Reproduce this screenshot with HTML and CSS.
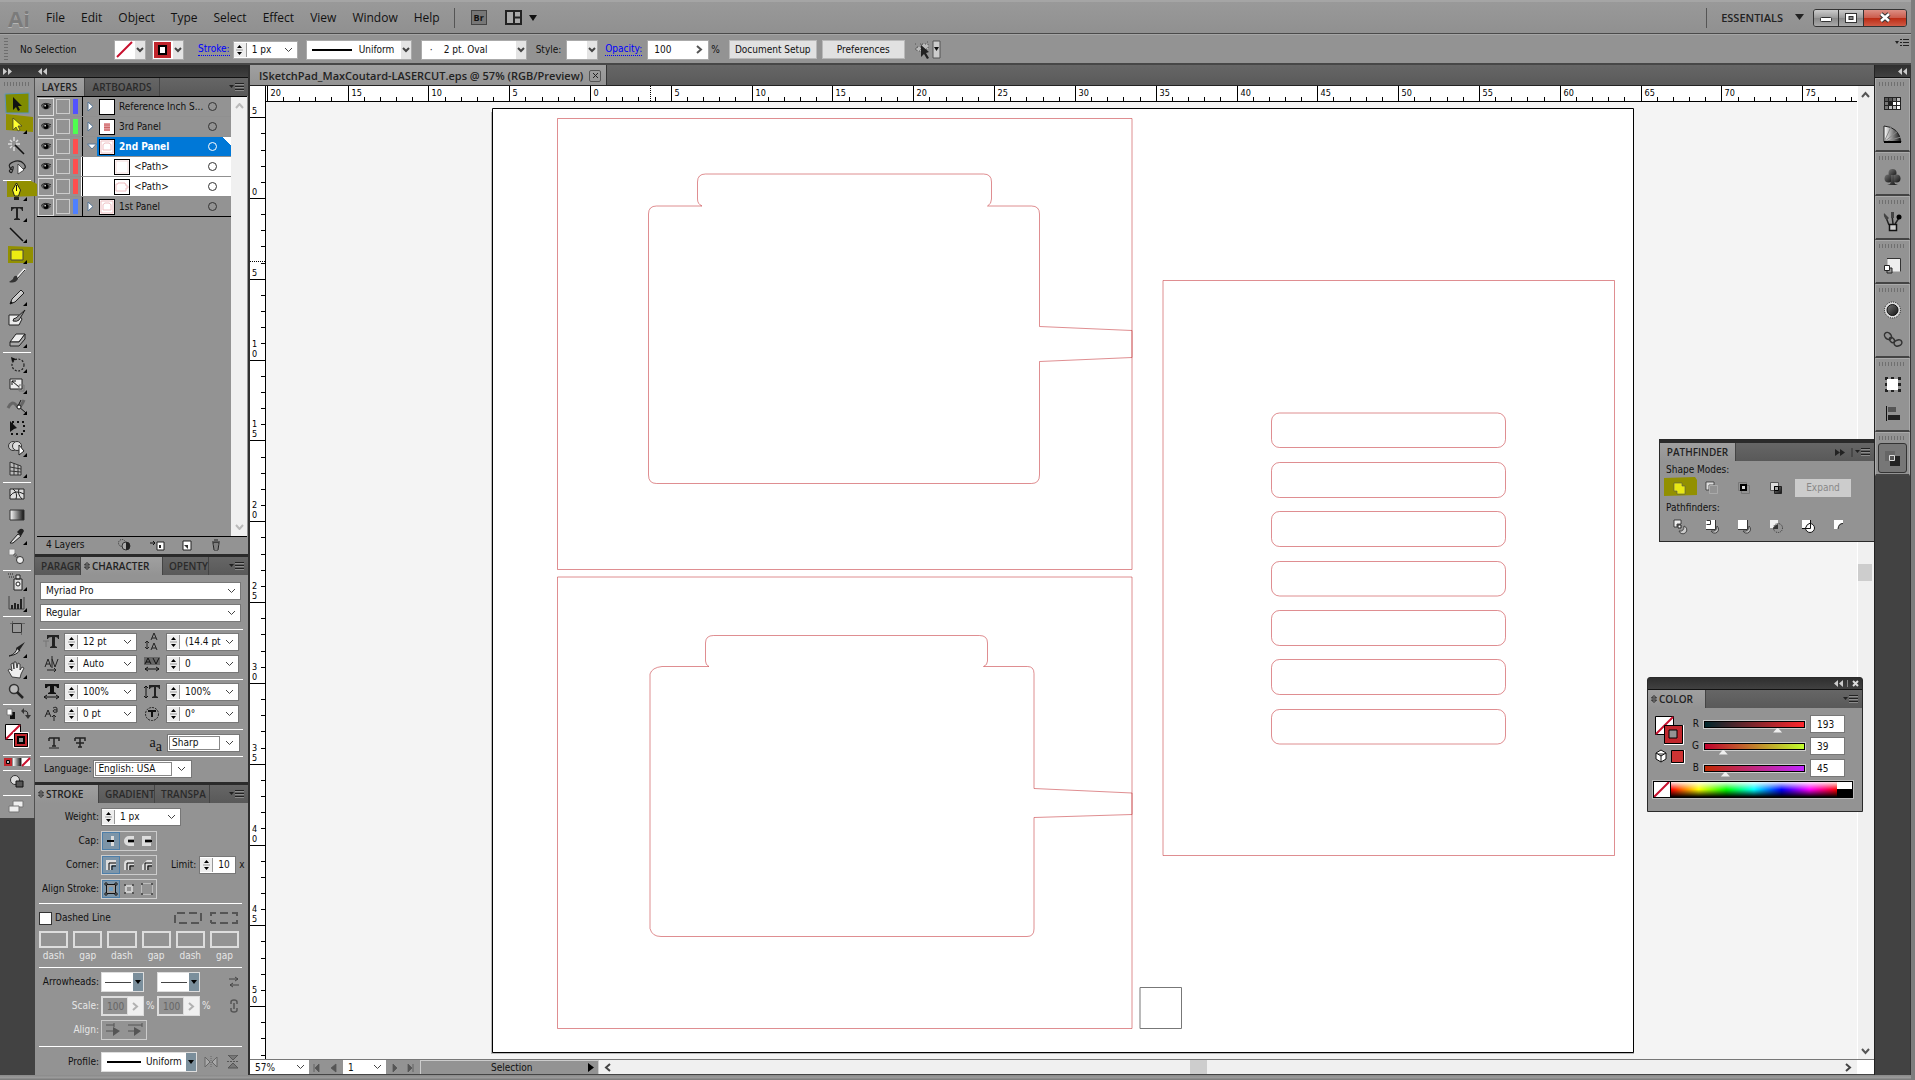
FILE: index.html
```html
<!DOCTYPE html>
<html lang="en">
<head>
<meta charset="utf-8">
<title>ISketchPad_MaxCoutard-LASERCUT.eps</title>
<link rel="stylesheet" href="styles.css">
</head>
<body>
<svg class="defs" aria-hidden="true">
  <defs>
    <linearGradient id="shine" x1="0" y1="0" x2="1" y2="1"><stop offset="0" stop-color="#fff"/><stop offset="1" stop-color="#999"/></linearGradient>
    <linearGradient id="dusk" x1="0" y1="0" x2="1" y2="1"><stop offset="0" stop-color="#777"/><stop offset="1" stop-color="#111"/></linearGradient>
    <linearGradient id="ramp"><stop offset="0" stop-color="#fff"/><stop offset="1" stop-color="#111"/></linearGradient>
  </defs>
  <symbol id="menu" viewBox="0 0 16 9"><path d="M0 2h5L2.500 5z" fill="#222"/><path d="M6 .5h9M6 3.500h9M6 6.500h9" stroke="#222"/><path d="M6 1.500h9M6 4.500h9M6 7.500h9" stroke="#aaa" stroke-opacity=".6"/></symbol>
  <symbol id="eye" viewBox="0 0 12 10"><path d="M0 5Q3 1 7 2t5 3Q9 9 5 8.500 2 8 0 5z" fill="#555"/><circle cx="6" cy="5" r="3" fill="#000"/><circle cx="5" cy="4" r="1" fill="#ddd"/><path d="M0 4Q4-1 12 3" fill="none" stroke="#111"/></symbol>
  <symbol id="updown" viewBox="0 0 6 8"><path d="M.5 3L3 .5 5.500 3zM.5 5L3 7.500 5.500 5z" fill="none" stroke="#222"/></symbol>
  <symbol id="corner" viewBox="0 0 34 21"><path d="M27 19v-4l-4 4z" fill="#000"/></symbol>
</svg>

<header class="menubar">
  <span class="logo">Ai</span>
  <nav class="menus">
    <button>File</button><button>Edit</button><button>Object</button><button>Type</button><button>Select</button><button>Effect</button><button>View</button><button>Window</button><button>Help</button>
  </nav>
  <i class="vline"></i>
  <button class="bridge" aria-label="Bridge">Br</button>
  <button class="arrange" aria-label="Arrange documents"><svg width="32" height="16"><path d="M1 1h15v13H1z" fill="#aaa" stroke="#222" stroke-width="2"/><path d="M9 1v13M9 7.500h7" stroke="#222" stroke-width="2"/><path d="M24 5h8l-4 6z" fill="#111"/></svg></button>
  <span class="grow"></span>
  <i class="vline"></i>
  <button class="workspace">ESSENTIALS <svg width="9" height="7"><path d="M0 0h9L4.500 6z" fill="#222"/></svg></button>
  <div class="winbtns">
    <button aria-label="Minimise"><svg width="12" height="10"><rect x=".5" y="4.500" width="11" height="4" rx="1" fill="#fff" stroke="#333"/></svg></button>
    <button aria-label="Restore"><svg width="12" height="10"><rect x=".5" y=".5" width="11" height="9" fill="#fff" stroke="#333"/><rect x="4" y="3.500" width="4" height="3" fill="#888" stroke="#333"/></svg></button>
    <button class="close" aria-label="Close"><svg width="14" height="11"><path d="M3 2l8 7M11 2l-8 7" stroke="#333" stroke-width="4.500"/><path d="M3 2l8 7M11 2l-8 7" stroke="#fff" stroke-width="2.500"/></svg></button>
  </div>
</header>

<section class="control">
  <i class="vgrip"></i>
  <span class="nosel">No Selection</span>
  <span class="pick"><svg width="20" height="18"><path d="M2 16L17 1" stroke="#c8102e" stroke-width="2"/></svg><button class="dd" aria-label="Fill"></button></span>
  <span class="pick gap6"><svg width="20" height="18"><path d="M1 1h17v16H1z" fill="#c1272d"/><path d="M6 5h7v8H6z" fill="#fff" stroke="#000" stroke-width="2"/></svg><button class="dd" aria-label="Stroke colour"></button></span>
  <a class="tip gap14" href="#stroke">Stroke:</a>
  <span class="combo c65 gap3"><i class="spin"></i><select aria-label="Stroke weight"><option>1 px</option></select></span>
  <span class="pick c106 gap8"><i class="rule"></i><span>Uniform</span><button class="dd" aria-label="Width profile"></button></span>
  <span class="pick c106 gap9"><span class="brush">·</span><span class="pt">2 pt. Oval</span><button class="dd" aria-label="Brush"></button></span>
  <span class="gap9">Style:</span>
  <span class="pick gap5"><svg width="20" height="18"></svg><button class="dd" aria-label="Style"></button></span>
  <a class="tip gap7" href="#opacity">Opacity:</a>
  <span class="pick c62 gap5"><input class="op" value="100" aria-label="Opacity"><b class="more"></b></span>
  <span class="gap2">%</span>
  <button class="btn c88">Document Setup</button>
  <button class="btn c83">Preferences</button>
  <svg class="gap9" width="30" height="20"><path d="M1 4h2M6 4h2M1 9h2M13 2h1M3 7h4v4H3zM8 4h6v5H8z" fill="#bbb" stroke="#555" stroke-dasharray="1 2"/><path d="M7 5l8 7-3 1 3 5-2 1-3-5-3 3z" fill="#222"/><path d="M19 1h7v17h-7z" fill="#ccc" stroke="#555"/><path d="M20 7h5l-2.500 4z" fill="#111"/></svg>
  <span class="grow"></span>
  <svg class="ctlmenu" width="14" height="9"><path d="M0 3h4L2 6z" fill="#222"/><path d="M5 1.500h2M8 1.500h6M5 4.500h2M8 4.500h6M5 7.500h2M8 7.500h6" stroke="#222"/></svg>
</section>

<main class="work">
  <aside class="toolcol">
    <div class="strip"><svg width="9" height="7"><path d="M0 0l4 3.500L0 7zM5 0l4 3.500L5 7z" fill="#ccc"/></svg></div>
    <div class="tools">
      <i class="hgrip"></i>
      <button aria-label="Selection"><svg><path d="M5 0l24-1v20H6z" fill="#7f8c00" stroke="#5b95bd"/><path d="M13 3v13l3-3 2 4 2-1-2-4h4z" fill="#111"/></svg></button>
      <button aria-label="Direct selection"><svg><path d="M6-1l27 3v15L6 15z" fill="#929000"/><path d="M13 3v12l3-3 2 4 2-1-2-4h4z" fill="#ffff30" stroke="#333" stroke-width=".7"/><use href="#corner"/></svg></button>
      <button aria-label="Magic wand"><svg><path d="M15 9l9 9" stroke="#111" stroke-width="1.600"/><path d="M14 1v4M14 11v4M8 8h4M16 8h4M10 4l2 2M18 4l-2 2M10 12l2-2" stroke="#ddd" stroke-width="1.500"/></svg></button>
      <button aria-label="Lasso"><svg><path d="M12 13Q6 8 13 5t11 2-4 6M12 12q-4 1-2 3t3-3-3 0" fill="none" stroke="#222" stroke-width="1.200"/><path d="M18 7v10l6-4z" fill="#fff" stroke="#222" stroke-width=".7"/></svg></button>
      <i class="tsep"></i>
      <button aria-label="Pen"><svg><path d="M7-1h24l6 3v12l-30 1z" fill="#929000"/><path d="M16.500 1l4 7-2 6h-4l-2-6z" fill="#ffff30" stroke="#222"/><path d="M16.500 3v6" stroke="#111"/><path d="M14 15h5v3h-5z" fill="#222"/><use href="#corner"/></svg></button>
      <button aria-label="Type"><svg><path d="M11 4h12v4h-1q0-2-2-2.500h-2V15l2 1v1h-6v-1l2-1V5.500h-2q-2 .5-2 2.500h-1z" fill="#222"/><use href="#corner"/></svg></button>
      <button aria-label="Line segment"><svg><path d="M10 4l13 13" stroke="#111" stroke-width="1.500"/><use href="#corner"/></svg></button>
      <button aria-label="Rectangle"><svg><path d="M8 1l25 1v16H8z" fill="#929000"/><path d="M11 5h12v10H11z" fill="#ecec12" stroke="#444"/><use href="#corner"/></svg></button>
      <button aria-label="Paintbrush"><svg><path d="M25 3l-8 9" stroke="#eee" stroke-width="2.500"/><path d="M25 4l-8 9" stroke="#222"/><path d="M17 10q-3-1-4 3l-4 3q6 2 9-3z" fill="#333"/></svg></button>
      <button aria-label="Pencil"><svg><path d="M10 17l2-5 9-9 3 3-9 9z" fill="url(#shine)" stroke="#222"/><path d="M10 17l1-3 2 2z" fill="#111"/><use href="#corner"/></svg></button>
      <button aria-label="Blob brush"><svg><path d="M9 7h10l3 4-3 6H9z" fill="#eee" stroke="#222"/><path d="M25 2l-9 8q-3 0-3 3 4 1 6-1z" fill="#999" stroke="#222"/></svg></button>
      <button aria-label="Eraser"><svg><path d="M10 13l6-8h9l-6 8z" fill="#eee" stroke="#222"/><path d="M10 13v4h9l6-7V5l-6 8z" fill="#aaa" stroke="#222"/><use href="#corner"/></svg></button>
      <i class="tsep"></i>
      <button aria-label="Rotate"><svg><circle cx="18" cy="11" r="6" fill="none" stroke="#222" stroke-width="1.200" stroke-dasharray="2 1.500"/><path d="M11 3l5 2-4 3z" fill="#111"/><use href="#corner"/></svg></button>
      <button aria-label="Scale"><svg><path d="M10 4h12v10H10z" fill="#eee" stroke="#222"/><path d="M12 6l7 6M12 6h4M12 6v4" stroke="#111"/><path d="M19 10h5v6h-5z" fill="none" stroke="#777"/><use href="#corner"/></svg></button>
      <button aria-label="Warp"><svg><path d="M8 12q4-8 8-3t8-5" fill="none" stroke="#666" stroke-width="3"/><path d="M21 4l-3 6 8 7" fill="none" stroke="#111"/><circle cx="19" cy="11" r="2" fill="#fff" stroke="#111"/><use href="#corner"/></svg></button>
      <button aria-label="Free transform"><svg><path d="M12 5h12v12H12z" fill="none" stroke="#111" stroke-width="2" stroke-dasharray="2 3"/><path d="M10 4l7 7-3 1-4 3z" fill="#111"/></svg></button>
      <button aria-label="Shape builder"><svg><circle cx="13" cy="8" r="4.500" fill="#ccc" stroke="#333"/><circle cx="17" cy="8" r="4.500" fill="#ddd" stroke="#333"/><path d="M19 7v10l5-4z" fill="#fff" stroke="#222"/><use href="#corner"/></svg></button>
      <button aria-label="Perspective grid"><svg><path d="M10 3l11 4v9H10zM14 4v12M18 6v10M10 8l11 2M10 12l11 1" fill="#bbb" stroke="#333"/><use href="#corner"/></svg></button>
      <i class="tsep"></i>
      <button aria-label="Mesh"><svg><path d="M10 5h14v10H10z" fill="#ddd" stroke="#222"/><path d="M10 12q5-7 14-2M13 5q5 4 3 10M19 5q-2 5 3 10" fill="none" stroke="#222"/></svg></button>
      <button aria-label="Gradient"><svg><path d="M10 5h14v10H10z" fill="url(#ramp)" stroke="#333"/></svg></button>
      <button aria-label="Eyedropper"><svg><path d="M10 17l8-9 3 2-8 7z" fill="#ddd" stroke="#222"/><path d="M17 6l3-3q3-1 4 2l-3 5z" fill="#222"/><use href="#corner"/></svg></button>
      <button aria-label="Blend"><svg><path d="M9 2h6v6H9z" fill="#eee" stroke="#888"/><path d="M14 7l5 5" stroke="#555" stroke-width="3" stroke-dasharray="1 1"/><circle cx="20" cy="13" r="3.500" fill="#eee" stroke="#333"/></svg></button>
      <i class="tsep"></i>
      <button aria-label="Symbol sprayer"><svg><path d="M14 7h8v11h-8zM16 3h4v4h-4z" fill="#ddd" stroke="#222"/><circle cx="18" cy="12" r="2" fill="#fff" stroke="#222"/><path d="M8 2h6M9 5h5" stroke="#222" stroke-dasharray="1 1"/><use href="#corner"/></svg></button>
      <button aria-label="Column graph"><svg><path d="M9 3v13h15V4" fill="none" stroke="#444"/><path d="M12 16v-4M15 16v-6M18 16v-5M21 16V6" stroke="#222" stroke-width="2"/><use href="#corner"/></svg></button>
      <i class="tsep"></i>
      <button aria-label="Artboard"><svg><path d="M12.500 5.500h9v9h-9z" fill="#999" stroke="#333"/><path d="M10 5.500h2M22 5.500h3M12.500 3v2M21.500 15v2" stroke="#666"/></svg></button>
      <button aria-label="Slice"><svg><path d="M9 17q7-2 8-8l3 2q-3 5-11 6z" fill="#ddd" stroke="#222"/><path d="M16 9l3 3 6-9z" fill="#222"/><use href="#corner"/></svg></button>
      <button aria-label="Hand"><svg><path d="M12 17l-4-7 2-1 2 2-1-7 2-1 1 6V2h2l1 6 1-5 2 1v6l2-3 2 1-3 6-1 4z" fill="#eee" stroke="#222" stroke-width=".8"/><use href="#corner"/></svg></button>
      <button aria-label="Zoom"><svg><circle cx="14" cy="8" r="4.500" fill="#bbb" stroke="#333" stroke-width="1.500"/><path d="M17 11l6 6" stroke="#222" stroke-width="2.500"/></svg></button>
      <i class="tsep"></i>
      <button class="h16" aria-label="Default and swap"><svg><path d="M10 6h5v7h-5z" fill="#111"/><path d="M7 3h5v6H7z" fill="#fff" stroke="#777"/><path d="M23 5h3q2 0 2 5" stroke="#222" fill="none"/><path d="M24 2v6l-3-3zM25 9h6l-3 4z" fill="#333"/></svg></button>
      <button class="h32" aria-label="Fill and stroke"><svg><path d="M5.500 2.500h15v15h-15z" fill="#fff" stroke="#000"/><path d="M6 17L20 3" stroke="#c8102e" stroke-width="2"/><path d="M13.500 10.500h15v15h-15z" fill="#c1272d" stroke="#fff"/><path d="M14.500 11.500h13v13h-13z" fill="none" stroke="#000"/><path d="M18 15h6v6h-6z" fill="#939393" stroke="#000" stroke-width="2"/></svg></button>
      <i class="tsep"></i>
      <button class="h11" aria-label="Paint type"><svg><path d="M4 1h8v8H4z" fill="#c1272d"/><path d="M6.500 3.500h3v3h-3z" fill="#bbb" stroke="#000"/><path d="M13 1h8v8h-8z" fill="url(#ramp)"/><path d="M22 1h8v8h-8z" fill="#fff"/><path d="M22 9l8-8" stroke="#c8102e" stroke-width="2"/></svg></button>
      <i class="tsep"></i>
      <button aria-label="Drawing mode"><svg><circle cx="15" cy="8" r="4.500" fill="#ddd" stroke="#333"/><path d="M16 9h7v6h-7z" fill="#555" stroke="#111"/></svg></button>
      <i class="tsep"></i>
      <button aria-label="Screen mode"><svg><path d="M13 4h10v6H13z" fill="#eee" stroke="#777"/><path d="M9 9h10v6H9z" fill="#eee" stroke="#777"/></svg></button>
    </div>
  </aside>

  <aside class="dock">
    <div class="strip"><svg width="9" height="7"><path d="M4 0L0 3.500 4 7zM9 0L5 3.500 9 7z" fill="#ccc"/></svg></div>
    <section class="panel layers">
      <div class="tabs"><button class="tab on w50">LAYERS</button><button class="tab w75">ARTBOARDS</button><span class="grow"></span><svg class="pm"><use href="#menu"/></svg></div>
      <div class="layerbox">
        <ul class="layerlist">
          <li><svg class="eye"><use href="#eye"/></svg><i class="lock"></i><i class="bar blue"></i><i class="tri"></i><i class="thumb"></i><span>Reference Inch S...</span><i class="ring"></i></li>
          <li><svg class="eye"><use href="#eye"/></svg><i class="lock"></i><i class="bar green"></i><i class="tri"></i><i class="thumb"><svg width="14" height="14"><path d="M4 3h6v8H4z" fill="#e39a9e"/><path d="M4 5h6M4 7.500h6M4 10h6" stroke="#c66"/></svg></i><span>3rd Panel</span><i class="ring"></i></li>
          <li class="sel"><svg class="eye"><use href="#eye"/></svg><i class="lock"></i><i class="bar red"></i><i class="tri open"></i><i class="thumb"><svg width="14" height="14"><path d="M1 1h12v12H1zM3 5q0-1 2-2h4q2 1 2 2v5H3z" fill="none" stroke="#efbfc2"/></svg></i><span>2nd Panel</span><i class="ring"></i></li>
          <li class="sub"><svg class="eye"><use href="#eye"/></svg><i class="lock"></i><i class="bar red"></i><i class="tri"></i><i class="thumb"><svg width="14" height="14"><path d="M1 1h12v12H1z" fill="none" stroke="#f6dcdc"/></svg></i><span>&lt;Path&gt;</span><i class="ring"></i></li>
          <li class="sub"><svg class="eye"><use href="#eye"/></svg><i class="lock"></i><i class="bar red"></i><i class="tri"></i><i class="thumb"><svg width="14" height="14"><path d="M1 4h2V3h7v1h1v2h2v2h-2v3H1z" fill="none" stroke="#efbfc2"/></svg></i><span>&lt;Path&gt;</span><i class="ring"></i></li>
          <li class="last"><svg class="eye"><use href="#eye"/></svg><i class="lock"></i><i class="bar sky"></i><i class="tri"></i><i class="thumb"><svg width="14" height="14"><path d="M1 1h12v12H1zM3 5q0-1 2-2h4q2 1 2 2v5H3z" fill="none" stroke="#efbfc2"/></svg></i><span>1st Panel</span><i class="ring"></i></li>
        </ul>
        <div class="pscroll"><svg width="9" height="6"><path d="M1 5l3.500-4L8 5" fill="none" stroke="#bbb" stroke-width="2"/></svg><svg width="9" height="6"><path d="M1 1l3.500 4L8 1" fill="none" stroke="#bbb" stroke-width="2"/></svg></div>
      </div>
      <div class="layerfoot">
        <span>4 Layers</span>
        <svg width="14" height="12"><circle cx="4" cy="4" r="3.500" fill="none" stroke="#333" stroke-dasharray="1 1"/><circle cx="8" cy="7" r="4" fill="#aaa" stroke="#333"/><path d="M8 3a4 4 0 010 8z" fill="#222"/></svg>
        <svg width="15" height="12"><path d="M0 4h5M3 2l2 2-2 2" stroke="#111" fill="none"/><path d="M7 3h7v8H7z" fill="#fff" stroke="#222"/><path d="M9 6h2v3H9z" fill="#222"/></svg>
        <svg width="11" height="12"><path d="M1 2h8v9H1z" fill="#fff" stroke="#222"/><path d="M2 6h4v4z" fill="#333"/></svg>
        <svg width="11" height="12"><path d="M1 3h8M3 1h4M2 4h6l-1 7H3zM4 5v5M6 5v5" fill="#ddd" stroke="#222"/></svg>
      </div>
    </section>

    <section class="panel">
      <div class="tabs"><button class="tab w46 cut">PARAGR</button><button class="tab on front w82"><svg class="ud"><use href="#updown"/></svg>CHARACTER</button><button class="tab w46 cut">OPENTY</button><span class="grow"></span><svg class="pm"><use href="#menu"/></svg></div>
      <div class="char">
        <select class="wide" aria-label="Font family"><option>Myriad Pro</option></select>
        <select class="wide" aria-label="Font style"><option>Regular</option></select>
        <hr>
        <div class="grid4">
          <label for="fs" aria-label="Font size"><svg width="18" height="16"><path d="M4 1h12v4h-1q0-2-3-2v9l2 1v1H7v-1l2-1V3Q5 3 5 5H4z" fill="#222"/><path d="M0 7h6M3 7v6" stroke="#777"/></svg></label><span class="combo"><i class="spin"></i><select id="fs"><option>12 pt</option></select></span>
          <label for="ld" aria-label="Leading"><svg width="16" height="18"><path d="M7 7l3-7 3 7M8 5h4M7 17l3-7 3 7M8 15h4M3 8v8M1 10l2-2 2 2M1 14l2 2 2-2" fill="none" stroke="#222"/></svg></label><span class="combo"><i class="spin"></i><select id="ld"><option>(14.4 pt</option></select></span>
          <label for="kn" aria-label="Kerning"><svg width="16" height="16"><path d="M1 11l3-8 3 8M2 8h4M8 3l3 8 3-8M8 0v12M3 14h9M10 12l2 2-2 2" fill="none" stroke="#222"/></svg></label><span class="combo"><i class="spin"></i><select id="kn"><option>Auto</option></select></span>
          <label for="tr" aria-label="Tracking"><svg width="16" height="16"><path d="M0 1h16v8H0z" fill="#666"/><path d="M1 8l3-6 3 6M2 6h4M9 2l3 6 3-6M1 13h14M4 11l-3 2 3 2M12 11l3 2-3 2" fill="none" stroke="#111"/></svg></label><span class="combo"><i class="spin"></i><select id="tr"><option>0</option></select></span>
        </div>
        <hr>
        <div class="grid4">
          <label for="hs" aria-label="Horizontal scale"><svg width="18" height="16"><path d="M2 0h14v4h-2q0-2-3-2v6l2 1v1H5V9l2-1V2Q4 2 4 4H2z" fill="#111"/><path d="M1 13h15M4 11l-3 2 3 2M13 11l3 2-3 2" fill="none" stroke="#111"/></svg></label><span class="combo"><i class="spin"></i><select id="hs"><option>100%</option></select></span>
          <label for="vs" aria-label="Vertical scale"><svg width="18" height="16"><path d="M6 1h11v4h-1q0-2-3-2v9l2 1v1H9v-1l2-1V3Q7 3 7 5H6z" fill="#222"/><path d="M3 2v12M1 4l2-2 2 2M1 12l2 2 2-2" fill="none" stroke="#111"/></svg></label><span class="combo"><i class="spin"></i><select id="vs"><option>100%</option></select></span>
          <label for="bs" aria-label="Baseline shift"><svg width="16" height="16"><path d="M1 11l3-7 3 7M2 8h4M9 2q4-2 4 1v3q-4 1-4-1t4-1M10 15V9M8 11l2-2 2 2" fill="none" stroke="#222"/></svg></label><span class="combo"><i class="spin"></i><select id="bs"><option>0 pt</option></select></span>
          <label for="rt" aria-label="Rotation"><svg width="16" height="16"><circle cx="8" cy="8" r="6.500" fill="none" stroke="#222" stroke-dasharray="2 1"/><path d="M4 5h8M8 5v6" stroke="#111" stroke-width="2"/></svg></label><span class="combo"><i class="spin"></i><select id="rt"><option>0°</option></select></span>
        </div>
        <hr>
        <div class="aarow">
          <svg width="12" height="12"><path d="M1 1h10v3M1 4V1M6 1v8M4 9h4" fill="none" stroke="#222" stroke-width="1.500"/><path d="M1 11h10" stroke="#222"/></svg>
          <svg class="strike" width="12" height="12"><path d="M1 1h10v3M1 4V1M6 1v9M4 10h4M2 6h8" fill="none" stroke="#222" stroke-width="1.500"/></svg>
          <label for="aa">a<sub>a</sub></label><span class="boxed w73"><input id="aa" value="Sharp"><b class="chev"></b></span>
        </div>
        <hr>
        <div class="langrow"><label for="lang">Language:</label><span class="boxed w99"><input id="lang" value="English: USA"><b class="chev"></b></span></div>
      </div>
    </section>

    <section class="panel strokep" id="stroke">
      <div class="tabs"><button class="tab on front w64"><svg class="ud"><use href="#updown"/></svg>STROKE</button><button class="tab w56 cut">GRADIENT</button><button class="tab w55 cut">TRANSPA</button><span class="grow"></span><svg class="pm"><use href="#menu"/></svg></div>
      <div class="srow"><label for="wt">Weight:</label><span class="combo w80"><i class="spin"></i><select id="wt"><option>1 px</option></select></span></div>
      <div class="srow"><span class="lab">Cap:</span><span class="trio">
        <button class="on" aria-label="Butt"><svg><path d="M8 3h3v10H8z" fill="#ddd"/><path d="M4 8h7" stroke="#000" stroke-width="2"/></svg></button>
        <button aria-label="Round"><svg><path d="M13 3H8a5 5 0 000 10h5v-3H7V6h6z" fill="#ddd"/><path d="M7 8h6" stroke="#000" stroke-width="2"/></svg></button>
        <button aria-label="Projecting"><svg><path d="M3 3h9v3H6v4h6v3H3z" fill="#ddd"/><path d="M6 8h7" stroke="#000" stroke-width="2"/></svg></button></span></div>
      <div class="srow"><span class="lab">Corner:</span><span class="trio">
        <button class="on" aria-label="Mitre"><svg><path d="M3 13V3h10v5H8v5z" fill="#ddd"/><path d="M6 13V6h7M9 13V9h4" fill="none" stroke="#000"/></svg></button>
        <button aria-label="Round join"><svg><path d="M3 13V7q0-4 4-4h6v5H8v5z" fill="#ddd"/><path d="M6 13V6h7M9 13V9h4" fill="none" stroke="#000"/></svg></button>
        <button aria-label="Bevel"><svg><path d="M3 13V8l5-5h5v5H8v5z" fill="#ddd"/><path d="M6 13V6h7M9 13V9h4" fill="none" stroke="#000"/></svg></button></span>
        <label class="limit" for="lim">Limit:</label><span class="combo w37"><i class="spin"></i><input id="lim" value="10"></span><span class="x">x</span></div>
      <div class="srow"><span class="lab">Align Stroke:</span><span class="trio">
        <button class="on" aria-label="Centre"><svg><path d="M3.500 3.500h9v9h-9z" fill="#999" stroke="#111"/><path d="M2 2h2v2H2zM12 2h2v2h-2zM2 12h2v2H2zM12 12h2v2h-2z" fill="#ddd" stroke="#111"/><path d="M6 6h4v4H6z" fill="#6d9fc5"/></svg></button>
        <button aria-label="Inside"><svg><path d="M5 5h6v6H5z" fill="none" stroke="#ccc" stroke-width="2"/><path d="M3 3h2v2H3zM11 3h2v2h-2zM3 11h2v2H3zM11 11h2v2h-2z" fill="#555"/></svg></button>
        <button aria-label="Outside"><svg><path d="M2.500 2.500h11v11h-11z" fill="none" stroke="#bbb"/><path d="M2 2h2v2H2zM12 2h2v2h-2zM2 12h2v2H2zM12 12h2v2h-2z" fill="#555"/></svg></button></span></div>
      <hr>
      <div class="dashrow"><input type="checkbox" id="dl"><label for="dl">Dashed Line</label><span class="grow"></span>
        <svg width="28" height="12"><path d="M1 11V1h26v10z" fill="none" stroke="#555" stroke-width="2" stroke-dasharray="8 4"/></svg>
        <svg width="28" height="12"><path d="M1 11V8M1 4V1h5M10 1h8M22 1h5v3M27 8v3h-5M18 11h-8M6 11H1" fill="none" stroke="#555" stroke-width="2"/></svg></div>
      <div class="dashes">
        <label><input disabled>dash</label><label><input disabled>gap</label><label><input disabled>dash</label><label><input disabled>gap</label><label><input disabled>dash</label><label><input disabled>gap</label>
      </div>
      <hr>
      <div class="srow"><span class="lab">Arrowheads:</span><span class="lined w43"><i></i><button aria-label="Start arrowhead"></button></span><span class="lined w43 gap13"><i></i><button aria-label="End arrowhead"></button></span><svg class="tail" width="12" height="12"><path d="M1 3h9M7 1l3 2-3 2M11 9H2M5 7L2 9l3 2" fill="none" stroke="#444"/></svg></div>
      <div class="srow dis"><span class="lab">Scale:</span><span class="scale"><input disabled value="100" aria-label="Start scale"><b class="more"></b></span><span class="pc">%</span><span class="scale"><input disabled value="100" aria-label="End scale"><b class="more"></b></span><span class="pc">%</span><svg class="tail" width="12" height="14"><path d="M3 5V3q0-2 3-2t3 2v2M3 9v2q0 2 3 2t3-2V9M6 4v6" fill="none" stroke="#555" stroke-width="1.500"/></svg></div>
      <div class="srow dis"><span class="lab">Align:</span><span class="duo"><svg width="20" height="16"><path d="M3 3h8M11 1v4M3 9h8" stroke="#555"/><path d="M10 5l7 4-7 5z" fill="#555"/></svg><svg width="20" height="16"><path d="M3 3h14M17 1v4M3 9h8" stroke="#555"/><path d="M9 5l7 4-7 5z" fill="#555"/></svg></span></div>
      <hr>
      <div class="srow"><span class="lab">Profile:</span><span class="lined w96"><i class="thick"></i><span>Uniform</span><button aria-label="Profile"></button></span><svg class="tail" width="36" height="14"><path d="M1 2v10l5-5zM13 2v10L8 7z" fill="#aaa" stroke="#666"/><path d="M7 1v12" stroke="#666" stroke-dasharray="1 1"/><path d="M24 0h10l-5 5zM24 13h10l-5-5z" fill="#777" stroke="#555"/><path d="M23 6.500h12" stroke="#555" stroke-dasharray="2 1"/></svg></div>
    </section>
  </aside>

  <section class="doc">
    <div class="doctabs"><div class="doctab"><span>ISketchPad_MaxCoutard-LASERCUT.eps @ 57% (RGB/Preview)</span><button aria-label="Close document"><svg width="7" height="7"><path d="M1 1l5 5M6 1L1 6" stroke="#222"/></svg></button></div></div>
    <div class="stage">
      <div class="view">
        <div class="rulercorner"></div>
        <svg class="ruler hr" id="hr"></svg>
        <svg class="ruler vr" id="vr"></svg>
        <div class="canvas">
          <svg class="art" width="1640" height="960">
            <g transform="translate(-266 -102)" fill="none">
              <path d="M491 112h1143v942H491z" fill="#b9b9b9"/>
              <path d="M492.500 108.500h1141v944h-1141z" fill="#fff" stroke="#000"/>
              <g stroke="#c1272d" stroke-opacity=".52">
                <path d="M557.500 118.500H1132V569.500H557.500zM557.500 577H1132V1028.500H557.500z"/>
                <path d="M1163 280.500h451.500v575H1163z"/>
                <path d="M697.500 182q0-8 8-8h278q8 0 8 8v17q0 5-4 7h44q8 0 8 8V326.500L1132 330.500V357.500L1039.500 361.500V475q0 8.500-8 8.500H656.500q-8 0-8-8.500V214q0-8 8-8H702q-4.500-2-4.500-7z"/>
                <path d="M705.500 643q0-7.500 8-7.500h266q8 0 8 7.500v18q0 4-4 5.500h44q6.500 0 6.500 7V788.500L1132 793V814.500L1034 817.500V929q0 7.500-7 7.500H661q-9 0-11-8V674q2-6.500 12-7.500h47q-3.500-1.500-3.500-5.500z"/>
                <rect x="1271.500" y="413" width="234" height="34.500" rx="8"/>
                <rect x="1271.500" y="462.500" width="234" height="35" rx="8"/>
                <rect x="1271.500" y="511.500" width="234" height="35" rx="8"/>
                <rect x="1271.500" y="561.500" width="234" height="34.500" rx="8"/>
                <rect x="1271.500" y="610.500" width="234" height="35" rx="8"/>
                <rect x="1271.500" y="659.500" width="234" height="35" rx="8"/>
                <rect x="1271.500" y="709.500" width="234" height="34.500" rx="8"/>
              </g>
              <path d="M1140 987.500h41.500v41H1140z" stroke="#777"/>
            </g>
          </svg>
        </div>
      </div>
      <div class="vscroll"><svg width="9" height="7"><path d="M1 6l3.500-4L8 6" fill="none" stroke="#555" stroke-width="2"/></svg><i class="thumbv"></i><svg width="9" height="7"><path d="M1 1l3.500 4L8 1" fill="none" stroke="#555" stroke-width="2"/></svg></div>
    </div>
    <footer class="status">
      <select class="zoomsel" aria-label="Zoom"><option>57%</option></select>
      <svg class="nav" width="34" height="11"><path d="M5 2v8M10 2v8L6 6zM27 2v8l-5-4z" fill="#555" stroke="#555" stroke-width=".8"/></svg>
      <select class="pagesel" aria-label="Artboard number"><option>1</option></select>
      <svg class="nav" width="34" height="11"><path d="M7 2v8l4-4zM22 2v8l4-4zM27 2v8" fill="#555" stroke="#555" stroke-width=".8"/></svg>
      <button class="mode"><span>Selection</span><svg width="6" height="9"><path d="M0 0l6 4.500L0 9z" fill="#000"/></svg></button>
      <div class="hscroll"><svg width="7" height="9"><path d="M6 1L2 4.500 6 8" fill="none" stroke="#444" stroke-width="2"/></svg><i class="thumbh"></i><svg width="7" height="9"><path d="M1 1l4 3.500L1 8" fill="none" stroke="#444" stroke-width="2"/></svg></div>
      <i class="fill"></i>
    </footer>

    <section class="float pathfinder">
      <div class="tabs"><button class="tab on w76">PATHFINDER</button><span class="grow"></span><svg width="20" height="9"><path d="M0 1l5 3.500L0 8zM5 1l5 3.500L5 8z" fill="#222"/><path d="M17 0v9" stroke="#333"/></svg><svg class="pm"><use href="#menu"/></svg></div>
      <span class="ptitle">Shape Modes:</span>
      <div class="pficons">
        <button aria-label="Unite"><svg><path d="M-5-1l31-1 2 3v15l-33 1z" fill="#929000"/><path d="M5 4h8v3h3v8H8v-3H5z" fill="#e8e814" stroke="#555" stroke-width=".6"/></svg></button>
        <button aria-label="Minus front"><svg><path d="M5 3h8v3H8v5H5z" fill="#ddd" stroke="#222" stroke-width=".7"/><path d="M8.500 6.500h8v8h-8z" fill="none" stroke="#aaa"/></svg></button>
        <button aria-label="Intersect"><svg><path d="M5.500 3.500h8v8h-8z" fill="none" stroke="#777"/><path d="M8.500 6.500h8v8h-8z" fill="none" stroke="#777"/><path d="M8 6h5v5H8z" fill="#ddd" stroke="#000" stroke-width="2"/></svg></button>
        <button aria-label="Exclude"><svg><path d="M5.500 3.500h8v8h-8z" fill="#ddd" stroke="#555"/><path d="M9.500 7.500h7v7h-7z" fill="url(#dusk)" stroke="#222"/><path d="M9.500 7.500h4v4h-4z" fill="#aaa" stroke="#000"/></svg></button>
        <button class="expand" disabled>Expand</button>
      </div>
      <span class="ptitle">Pathfinders:</span>
      <div class="pficons">
        <button aria-label="Divide"><svg><path d="M5 3h7v4H8v3H5z" fill="#eee" stroke="#222" stroke-width=".8"/><path d="M9 8h3v3H9z" fill="#fff" stroke="#222"/><path d="M15 9a4 4 0 11-5 5q5 1 5-5z" fill="#ccc" stroke="#444"/></svg></button>
        <button aria-label="Trim"><svg><path d="M5 3h9v9H5z" fill="#fff"/><path d="M5.500 3.500h4v4h-4M14.500 3v9.500H5" stroke="#333" fill="none"/><path d="M16 9a4 4 0 11-6 5q6 1 6-5z" fill="#bbb" stroke="#444"/></svg></button>
        <button aria-label="Merge"><svg><path d="M5 3h9v9H5z" fill="#fff"/><path d="M14.500 3v9.500H5" stroke="#333" fill="none"/><path d="M16 9a4 4 0 11-6 5q6 1 6-5z" fill="#bbb" stroke="#444"/></svg></button>
        <button aria-label="Crop"><svg><path d="M5 3h8v8H5z" fill="#eee"/><path d="M13 7v5H8q1-4 5-5z" fill="#333"/><circle cx="13" cy="11" r="4.500" fill="none" stroke="#333" stroke-dasharray="1 1"/></svg></button>
        <button aria-label="Outline"><svg><circle cx="13" cy="11" r="4.500" fill="#fff" stroke="#111"/><path d="M5 3h8v8H5z" fill="#fff"/><path d="M5 11.500h8.500V3M8.500 11q1-4 5-5" fill="none" stroke="#111"/></svg></button>
        <button aria-label="Minus back"><svg><path d="M5 3h9v3q-5 0-5 6H5z" fill="#fff"/><path d="M14 6.500q-4.500 0-5 5.500" fill="none" stroke="#222"/></svg></button>
      </div>
    </section>

    <section class="float color">
      <div class="strip right"><svg width="9" height="7"><path d="M4 0L0 3.500 4 7zM9 0L5 3.500 9 7z" fill="#ccc"/></svg><i></i><svg width="7" height="7"><path d="M1 1l5 5M6 1L1 6" stroke="#ddd" stroke-width="2"/></svg></div>
      <div class="tabs"><button class="tab on front w58"><svg class="ud"><use href="#updown"/></svg>COLOR</button><span class="grow"></span><svg class="pm"><use href="#menu"/></svg></div>
      <div class="colorbody">
        <svg width="32" height="50"><path d="M1.500 1.500h18v18h-18z" fill="#fff" stroke="#000"/><path d="M2 19L19 2" stroke="#c8102e" stroke-width="2"/><path d="M10.500 10.500h18v18h-18z" fill="#c1272d" stroke="#000"/><path d="M10 29.500h19.500V10" fill="none" stroke="#fff"/><path d="M15 15h8v8h-8z" fill="#939393" stroke="#000"/><path d="M2 38l5-3 5 3v6l-5 3-5-3zM2 38l5 3 5-3M7 41v6" fill="#fff" stroke="#111"/><path d="M17.500 35.500h12v12h-12z" fill="#cc3333" stroke="#000"/><path d="M17 48.500h13.500V35" fill="none" stroke="#fff"/></svg>
        <div class="sliders">
          <label for="r">R</label><input type="range" class="gr" min="0" max="255" value="193" aria-label="Red"><input id="r" value="193">
          <label for="g">G</label><input type="range" class="gg" min="0" max="255" value="39" aria-label="Green"><input id="g" value="39">
          <label for="b">B</label><input type="range" class="gb" min="0" max="255" value="45" aria-label="Blue"><input id="b" value="45">
        </div>
      </div>
      <div class="spectrum"><svg width="16" height="15"><path d="M0 15L15 0" stroke="#c8102e" stroke-width="2"/></svg><i class="hue"></i><i class="bw"></i></div>
    </section>
  </section>

  <aside class="rdock">
    <div class="strip right"><svg width="9" height="7"><path d="M4 0L0 3.500 4 7zM9 0L5 3.500 9 7z" fill="#ccc"/></svg></div>
    <div class="rgroup"><i class="hgrip"></i>
      <button aria-label="Swatches"><svg><path d="M6 7h17v13H6z" fill="#222"/><path d="M7 8h3v3H7zM11 8h3v3h-3z" fill="#555"/><path d="M15 8h3v3h-3zM7 12h3v3H7zM7 16h3v3H7z" fill="#777"/><path d="M19 8h3v3h-3zM11 16h3v3h-3zM15 16h3v3h-3z" fill="#bbb"/><path d="M15 12h3v3h-3zM19 12h3v3h-3zM19 16h3v3h-3z" fill="#fff"/></svg></button>
      <button aria-label="Color guide"><svg><path d="M6 22V6q15 1 17 16z" fill="url(#ramp)" stroke="#222"/><path d="M6 22L13 7M6 22l14-11M6 22l17-5" stroke="#888"/><path d="M6 22h17" stroke="#000" stroke-width="2"/></svg></button></div>
    <div class="rgroup"><i class="hgrip"></i><button aria-label="Symbols"><svg><g fill="url(#dusk)"><circle cx="14.500" cy="9" r="4"/><circle cx="10.500" cy="14.500" r="4"/><circle cx="18.500" cy="14.500" r="4"/><path d="M13 11h3v6l1 3 3 1H9l3-1 1-3z"/></g></svg></button></div>
    <div class="rgroup"><i class="hgrip"></i><button aria-label="Brushes"><svg><path d="M11 17L7 7M15 16l-1-9M17 16l4-6" stroke="#222" stroke-width="1.500"/><path d="M6 5l5 5-2 2q-4-3-3-7zM13 4h3v6h-3z" fill="#444"/><circle cx="21" cy="9" r="2.500" fill="#000"/><path d="M11.500 16.500h7v6h-7z" fill="#ccc" stroke="#111" stroke-width="1.500"/></svg></button></div>
    <div class="rgroup"><i class="hgrip"></i><button aria-label="Stroke"><svg><path d="M9.500 6.500h13v13h-13z" fill="#eee"/><path d="M9 6.500h13.500v13" stroke="#333" fill="none"/><path d="M9 16h5v5H9z" fill="#999" stroke="#222"/><path d="M6.500 13.500h5v5h-5z" fill="#fff" stroke="#222"/></svg></button></div>
    <div class="rgroup"><i class="hgrip"></i>
      <button aria-label="Appearance"><svg><circle cx="14.500" cy="14" r="8" fill="#ddd" stroke="#222" stroke-dasharray="1 1"/><circle cx="14.500" cy="14" r="5.500" fill="url(#dusk)" stroke="#111"/></svg></button>
      <button aria-label="Links"><svg><g fill="none" stroke="#333" stroke-width="1.500"><ellipse cx="10" cy="10" rx="4" ry="3" transform="rotate(45 10 10)"/><ellipse cx="14" cy="14" rx="3" ry="2" transform="rotate(45 14 14)"/><ellipse cx="20" cy="17" rx="4" ry="3" transform="rotate(-20 20 17)"/></g></svg></button></div>
    <div class="rgroup"><i class="hgrip"></i>
      <button aria-label="Transform"><svg><path d="M7 7h3v3H7zM13 7h3v3h-3zM20 7h3v3h-3zM7 13h3v3H7zM20 13h3v3h-3zM7 19h3v3H7zM13 19h3v3h-3zM20 19h3v3h-3z" fill="#222"/><path d="M9 9h11v11H9z" fill="#fff"/></svg></button>
      <button aria-label="Align"><svg><path d="M8.500 6v15" stroke="#111"/><path d="M10 7h8v5h-8z" fill="#555"/><path d="M10 15h12v5H10z" fill="#222"/></svg></button></div>
    <div class="rgroup"><i class="hgrip"></i><button class="on" aria-label="Pathfinder"><svg><path d="M7 7h10v10H7z" fill="#666"/><path d="M12 12h10v10H12z" fill="#222"/><path d="M11.500 11.500h5v5h-5z" fill="#555" stroke="#ddd"/></svg></button></div>
  </aside>
</main>
<div class="frame"></div>
<script src="rulers.js"></script>
</body>
</html>
```
FILE: styles.css
```css
* { box-sizing: border-box; }
html, body { height: 100%; margin: 0; }
body {
  display: flex;
  flex-direction: column;
  min-width: 1100px;
  background: #939393;
  color: #111;
  font: 10px/12px "DejaVu Sans Condensed", "DejaVu Sans", sans-serif;
  overflow: hidden;
  border-right: 4px solid #7d7d7d;
}
button, input, select { font: inherit; color: inherit; padding: 0; margin: 0; border: 0; background: none; border-radius: 0; min-width: 0; }
select { appearance: none; }
button { display: flex; align-items: center; justify-content: center; }
svg { display: block; flex: none; }
i { font-style: normal; }
.defs { position: absolute; width: 0; height: 0; }
.grow { flex: 1; }
.gap2 { margin-left: 2px; } .gap3 { margin-left: 3px; } .gap5 { margin-left: 5px; } .gap6 { margin-left: 6px; }
.gap7 { margin-left: 7px; } .gap8 { margin-left: 8px; } .gap9 { margin-left: 9px; } .gap13 { margin-left: 13px; } .gap14 { margin-left: 14px; }

/* menu bar */
.menubar {
  display: flex; align-items: center; flex: none; height: 34px; padding: 0 4px 0 8px;
  border-top: 2px solid #a5a5a5; border-bottom: 1px solid #4a4a4a;
  background: linear-gradient(#999, #909090);
}
.logo { width: 32px; font: 700 22px/28px "Open Sans", sans-serif; color: #7b7b7b; text-shadow: 0 1px #b5b5b5; }
.menus { display: flex; gap: 16px; margin-left: 6px; font: 12px/16px "Open Sans", sans-serif; }
.vline { width: 1px; height: 20px; margin-left: 14px; background: #555; }
.bridge { width: 16px; height: 15px; margin-left: 16px; border: 1px solid #444; background: #777; font: 700 9px/12px "Open Sans", sans-serif; }
.arrange { margin-left: 18px; }
.workspace { margin-left: 14px; gap: 12px; font: 600 11px/16px "Open Sans", sans-serif; color: #222; }
.winbtns { display: flex; margin-left: 9px; height: 18px; border: 1px solid #333; border-radius: 3px; overflow: hidden; }
.winbtns button { width: 25px; background: linear-gradient(#ccc, #999 50%, #888 51%, #aaa); border-right: 1px solid #333; }
.winbtns .close { width: 42px; border: 0; background: linear-gradient(#dc8f84, #cb5b4b 50%, #bb2b14 51%, #cf5a45); }

/* control bar */
.control {
  display: flex; align-items: center; flex: none; height: 31px; padding: 1px 2px 0 4px;
  border-top: 1px solid #a5a5a5; border-bottom: 2px solid #474747;
}
.vgrip { width: 4px; height: 24px; background: repeating-linear-gradient(#555 0 1px, transparent 1px 3px); opacity: .6; }
.nosel { width: 94px; margin-left: 12px; }
.tip { color: #00f; text-decoration: none; border-bottom: 1px dotted #00f; }
.pick { display: flex; align-items: center; height: 20px; border: 1px solid #aaa; background: #fff; }
.dd {
  width: 10px; height: 18px; margin-left: auto; flex: none;
  background: #e4e4e4 url("data:image/svg+xml,%3Csvg xmlns='http://www.w3.org/2000/svg' width='8' height='6'%3E%3Cpath d='M1 1l3 3 3-3' fill='none' stroke='%23444' stroke-width='2'/%3E%3C/svg%3E") center no-repeat;
}
.c106 { width: 106px; } .c62 { width: 62px; } .c65 { width: 65px; }
.rule { width: 40px; height: 2px; margin: 0 7px 0 5px; background: #000; }
.brush { width: 22px; padding-left: 8px; }
.op { width: 42px; padding-left: 6px; }
.more { width: 18px; height: 16px; background: url("data:image/svg+xml,%3Csvg xmlns='http://www.w3.org/2000/svg' width='7' height='9'%3E%3Cpath d='M1 1l4 3.500L1 8' fill='none' stroke='%23555' stroke-width='2'/%3E%3C/svg%3E") center no-repeat; }
.btn { height: 19px; border: 1px solid #b9b9b9; background: #e1e1e1; }
.c88 { width: 88px; margin-left: 9px; } .c83 { width: 83px; margin-left: 5px; }
.ctlmenu { align-self: flex-start; margin-top: 2px; }

/* combo boxes */
.combo { display: flex; height: 18px; border: 1px solid #777; background: #fff; }
.control .combo { border-color: #aaa; }
.combo select, .wide, .zoomsel, .pagesel, .combo input { flex: 1; width: 10px; padding-left: 5px; }
.combo select, .wide, .zoomsel, .pagesel, .chev {
  background: #fff url("data:image/svg+xml,%3Csvg xmlns='http://www.w3.org/2000/svg' width='9' height='6'%3E%3Cpath d='M1 1l3.500 3.500L8 1' fill='none' stroke='%23444' stroke-width='1'/%3E%3C/svg%3E") right 4px center no-repeat;
}
.spin {
  width: 13px; margin: 1px 0; border-right: 1px solid #999;
  background: #eee url("data:image/svg+xml,%3Csvg xmlns='http://www.w3.org/2000/svg' width='7' height='12'%3E%3Cpath d='M1 4l2.500-3L6 4zM1 8l2.500 3L6 8z'/%3E%3Cpath d='M0 6h7' stroke='%23999'/%3E%3C/svg%3E") center no-repeat;
}

/* work area */
.work { display: flex; flex: 1; min-height: 0; }
.strip { display: flex; align-items: center; height: 13px; flex: none; padding-left: 3px; background: linear-gradient(#2f2f2f, #404040); border-bottom: 1px solid #111; }
.strip.right { justify-content: flex-end; padding-right: 3px; }
.toolcol { position: relative; z-index: 1; width: 35px; flex: none; background: #424242; }
.tools { display: flex; flex-direction: column; padding-top: 4px; background: #939393; border-right: 1px solid #505050; }
.tools button { display: block; height: 21px; }
.tools svg { width: 34px; height: 21px; overflow: visible; }
.tools .h16, .tools .h16 svg { height: 16px; }
.tools .h32, .tools .h32 svg { height: 31px; }
.tools .h11, .tools .h11 svg { height: 11px; }
.hgrip { height: 4px; margin: 0 4px 8px; background: repeating-linear-gradient(90deg, #666 0 1px, transparent 1px 3px); opacity: .8; }
.tsep { height: 2px; margin: 1px 3px; border-bottom: 1px solid #fff; }

.dock { display: flex; flex-direction: column; width: 215px; flex: none; background: #939393; border-right: 2px solid #303030; }
.dock .strip { margin-left: -1px; padding-left: 4px; }
.panel { flex: none; border-bottom: 3px solid #2a2a2a; }
.tabs { display: flex; align-items: center; height: 18px; padding-right: 3px; background: linear-gradient(#666, #595959); }
.tab { height: 18px; font: 600 10px/18px "Open Sans", sans-serif; color: #2a2a2a; border-right: 1px solid #444; white-space: nowrap; overflow: hidden; }
.tab.on { background: linear-gradient(#a0a0a0, #939393); color: #222; }
.tab.cut { justify-content: flex-start; padding-left: 6px; }
.tab.front { justify-content: flex-start; padding-left: 3px; }
.ud { width: 6px; height: 8px; margin-right: 2px; }
.pm { width: 16px; height: 9px; }
.w50 { width: 50px; } .w75 { width: 75px; } .w46 { width: 46px; } .w82 { width: 82px; } .w64 { width: 64px; } .w56 { width: 56px; } .w55 { width: 55px; } .w76 { width: 76px; } .w58 { width: 58px; }
hr { height: 1px; margin: 0 2px 0 0; border: 0; background: #fff; }

/* layers */
.layerbox { display: flex; height: 441px; margin: 0 1px 0 2px; border-top: 1px solid #000; border-bottom: 1px solid #000; }
.layerlist { flex: 1; margin: 0; padding: 0; list-style: none; }
.layerlist li { display: flex; align-items: center; height: 20px; border-bottom: 1px solid #909090; }
.layerlist span { flex: 1; padding-left: 4px; white-space: nowrap; }
.eye { width: 16px; height: 18px; padding: 3px 2px 4px; border: 1px solid #ddd; margin-left: 1px; }
.lock { width: 14px; height: 15px; margin-left: 2px; border: 1px solid #ccc; }
.bar { width: 5px; height: 15px; margin-left: 3px; }
.blue { background: #5252ff; } .green { background: #4fff4f; } .red { background: #ff4f4f; } .sky { background: #4f80ff; }
.tri { align-self: stretch; width: 16px; margin-left: 4px; border-left: 1px solid #000; background: url("data:image/svg+xml,%3Csvg xmlns='http://www.w3.org/2000/svg' width='7' height='11'%3E%3Cpath d='M1 1l5 4.500L1 10z' fill='%23fff' stroke='%23579'/%3E%3C/svg%3E") 4px center no-repeat; }
.tri.open { background-image: url("data:image/svg+xml,%3Csvg xmlns='http://www.w3.org/2000/svg' width='10' height='7'%3E%3Cpath d='M.5 1h9L5 6z' fill='%23fff' stroke='%23579'/%3E%3C/svg%3E"); }
.thumb { width: 16px; height: 16px; margin-left: 1px; border: 1px solid #000; background: #fff; }
.ring { width: 9px; height: 9px; margin-right: 14px; border: 1px solid #333; border-radius: 50%; }
.sel { background: linear-gradient(45deg, #0078d7 calc(100% - 6px), #fff 0) right / 134px 100% no-repeat; color: #fff; font-weight: 700; }
.sel .ring { border-color: #fff; }
.sub { background: linear-gradient(#fff, #fff) right / 150px 100% no-repeat; }
.sub .tri { background: none; margin-right: 15px; }
.layerlist .last { border-bottom: 1px solid #000; }
.pscroll { display: flex; flex-direction: column; justify-content: space-between; align-items: center; width: 16px; padding: 6px 0; background: #f0f0f0; }
.layerfoot { display: flex; align-items: center; height: 17px; padding: 0 26px 1px 11px; justify-content: space-between; }
.layerfoot span { width: 54px; }

/* character */
.char { display: flex; flex-direction: column; height: 207px; padding: 7px 5px 0; }
.wide { flex: none; width: 201px; height: 18px; margin-bottom: 4px; border: 1px solid #777; }
.char hr { margin: 3px 0 3px; flex: none; }
.grid4 { display: grid; grid-template-columns: 24px 73px 29px 73px; gap: 4px 0; align-items: center; padding: 0 0 3px; }
.grid4 label { display: flex; justify-content: center; }
.aarow { display: flex; align-items: center; height: 20px; padding: 0 3px 0 8px; }
.strike { margin-left: 14px; }
.aarow label { margin-left: auto; margin-right: 5px; font: 14px/14px "Liberation Serif", serif; }
sub { font-size: 14px; line-height: 0; }
.boxed { display: flex; height: 18px; padding: 1px; border: 1px solid #777; background: #fff; }
.boxed input { flex: 1; width: 10px; padding-left: 2px; border: 1px solid #888; }
.chev { width: 18px; }
.w73 { width: 73px; } .w99 { width: 99px; } .w80 { width: 80px; } .w37 { width: 37px; } .w43 { width: 43px; } .w96 { width: 96px; }
.langrow { display: flex; align-items: center; gap: 2px; padding-left: 4px; }

/* stroke */
.strokep { flex: 1; border: 0; }
.srow { display: flex; align-items: center; height: 20px; margin-top: 4px; }
.srow > label:first-child, .lab { width: 64px; margin-right: 2px; text-align: right; white-space: nowrap; }
.strokep hr { margin: 4px 6px 5px 4px; }
.srow .limit { margin-left: 14px; margin-right: 3px; }
.x { margin-left: 3px; }
.trio, .duo { display: flex; height: 20px; border: 1px solid #ccc; }
.trio button { width: 18px; height: 18px; border: 1px solid transparent; }
.trio .on { border-color: #4d7ea8; background: #7d95a8; }
.trio svg { width: 16px; height: 16px; }
.duo { width: 46px; align-items: center; justify-content: space-around; }
.dashrow { display: flex; align-items: center; gap: 8px; height: 18px; padding: 0 10px 0 4px; }
.dashrow input { appearance: none; width: 13px; height: 13px; background: #fff; border: 1px solid #333; }
.dashrow label { margin-left: -5px; }
.dashes { display: flex; gap: 5px; padding: 4px 9px 0 4px; color: #e6e6e6; }
.dashes label { flex: 1; display: flex; flex-direction: column; align-items: center; gap: 2px; }
.dashes input { width: 100%; height: 17px; border: 2px solid #ddd; }
.dashes + hr { margin-top: 5px; margin-bottom: 2px; }
.dis + hr { margin-top: 6px; }
.lined { display: flex; align-items: center; height: 20px; border: 1px solid #ddd; background: #fff; }
.lined i { width: 26px; height: 1px; margin-left: 3px; background: #444; }
.lined .thick { width: 34px; height: 2px; margin-right: 5px; margin-left: 5px; background: #000; }
.lined button { width: 10px; height: 18px; margin-left: auto; background: #7b8f9c url("data:image/svg+xml,%3Csvg xmlns='http://www.w3.org/2000/svg' width='6' height='4'%3E%3Cpath d='M0 0h6L3 4z'/%3E%3C/svg%3E") center no-repeat; }
.tail { margin-left: auto; margin-right: 8px; }
.dis { color: #e6e6e6; height: 20px; }
.scale { display: flex; align-items: center; width: 43px; height: 20px; border: 1px solid #ddd; background: #f0f0f0; }
.scale input { width: 26px; height: 18px; padding-left: 4px; border: 1px solid #ddd; background: #939393; color: #666; }
.scale .more { opacity: .4; width: 15px; }
.pc { width: 13px; padding-left: 2px; }

/* document */
.doc { position: relative; display: flex; flex-direction: column; flex: 1; min-width: 0; }
.doctabs { display: flex; height: 20px; flex: none; background: linear-gradient(#666, #5a5a5a); }
.doctab { display: flex; align-items: center; gap: 6px; padding: 1px 5px 0 9px; background: linear-gradient(#a0a0a0, #939393); border-right: 1px solid #333; font: 600 11px/18px "Open Sans", sans-serif; color: #222; white-space: nowrap; }
.doctab button { width: 12px; height: 12px; border: 1px solid #555; border-radius: 2px; }
.stage { display: flex; flex: 1; min-height: 0; border-top: 1px solid #222; }
.view { flex: 1; min-width: 0; display: grid; grid-template: 16px minmax(0, 1fr) / 16px minmax(0, 1fr); }
.rulercorner { background: #fff; border-right: 1px solid #000; }
.ruler { width: 100%; height: 100%; background: #fff; overflow: hidden; font-size: 9px; }
.hr { border-bottom: 1px solid #000; }
.vr { border-right: 1px solid #000; }
.canvas { background: #f4f4f4; overflow: hidden; min-height: 0; }
.vscroll { display: flex; flex-direction: column; align-items: center; width: 17px; padding: 5px 2px 4px 0; background: #f0f0f0; border-left: 1px solid #fff; }
.thumbv { width: 14px; height: 17px; margin-top: calc(50vh - 74px); margin-bottom: auto; background: #cdcdcd; }
.status { display: flex; height: 16px; flex: none; border-top: 1px solid #777; border-bottom: 1px solid #444; align-items: stretch; }
.zoomsel { flex: none; width: 59px; } .pagesel { flex: none; width: 43px; }
.zoomsel, .pagesel { padding-top: 1px; }
.nav { align-self: center; }
.mode { width: 179px; padding: 0 4px 0 70px; justify-content: space-between; border: 1px solid #ccc; border-bottom: 0; }
.hscroll { display: flex; flex: 1; align-items: center; padding: 0 5px; background: #f0f0f0; }
.thumbh { width: 17px; height: 14px; margin-left: calc(46% + 5px); margin-right: auto; background: #cdcdcd; }
.fill { width: 17px; background: #fff; }

/* floating panels */
.float { position: absolute; background: #939393; border: 1px solid #2a2a2a; }
.pathfinder { top: 374px; right: 0; width: 215px; height: 103px; border-top-width: 4px; border-right: 0; }
.ptitle { display: block; padding: 2px 6px 2px; line-height: 14px; }
.pficons { display: flex; padding-left: 9px; height: 19px; }
.pficons + .ptitle { padding-top: 3px; }
.pficons button { width: 32px; height: 19px; justify-content: flex-start; }
.pficons svg { width: 20px; height: 19px; overflow: visible; }
.pficons .expand { width: 56px; height: 18px; margin-left: -2px; justify-content: center; background: #ccc; color: #888; }
.color { top: 612px; right: 11px; width: 216px; height: 135px; border-radius: 3px 3px 0 0; }
.color .strip { height: 12px; gap: 4px; }
.strip i { width: 1px; height: 7px; background: #888; }
.colorbody { display: flex; padding: 7px 0 0 6px; }
.sliders { display: grid; grid-template-columns: 13px 101px 35px; column-gap: 5px; row-gap: 4px; align-items: center; }
.sliders label { text-align: right; }
.sliders input { height: 18px; padding-left: 6px; border: 1px solid #777; background: #fff; }
.sliders input[type=range] { appearance: none; width: 101px; height: 18px; padding: 0; border: 0; background: none; }
input[type=range]::-webkit-slider-runnable-track { height: 7px; border: 1px solid #000; outline: 1px solid #ccc; background: var(--g); }
input[type=range]::-webkit-slider-thumb { appearance: none; width: 9px; height: 5px; margin-top: 6px; background: #eee; clip-path: polygon(50% 0, 100% 100%, 0 100%); }
.gr { --g: linear-gradient(90deg, #00272d, #ff272d); }
.gg { --g: linear-gradient(90deg, #c1002d, #c1ff2d); }
.gb { --g: linear-gradient(90deg, #c12700, #c127ff); }
.spectrum { display: flex; height: 17px; width: 200px; margin: 4px 0 0 5px; border: 1px solid #000; outline: 1px solid #bbb; background: #fff; }
.hue { flex: 1; border-left: 1px solid #000; background: linear-gradient(rgba(255,255,255,.9), transparent 50%, #000), linear-gradient(90deg, red, #ff0, #0f0, #0ff, #00f, #f0f, red); }
.bw { width: 15px; background: linear-gradient(#fff 50%, #000 50%); }

/* right dock */
.rdock { width: 37px; flex: none; background: #424242; border-left: 1px solid #222; border-right: 1px solid #333; }
.rdock .strip { height: 13px; }
.rgroup { display: flex; flex-direction: column; align-items: center; padding: 3px 0 1px; background: #939393; border: 1px solid #aaa; border-bottom: 2px solid #444; }
.rgroup .hgrip { align-self: stretch; height: 4px; margin: 0 3px 3px; }
.rgroup button { width: 29px; height: 30px; }
.rgroup svg { width: 29px; height: 28px; }
.rgroup .on { border: 1px solid #333; border-radius: 3px; background: #777; }
.frame { height: 5px; flex: none; background: linear-gradient(#8a8a8a, #9a9a9a 50%, #777); }
```
FILE: rulers.js
```js
// Draws the tick marks and numbers of both rulers; one ruler unit is UNIT pixels.
const UNIT = 16.163;
const NS = 'http://www.w3.org/2000/svg';

function add(svg, tag, attrs, text) {
  const el = document.createElementNS(NS, tag);
  for (const k in attrs) el.setAttribute(k, attrs[k]);
  if (text !== undefined) el.textContent = text;
  svg.appendChild(el);
}

function drawRuler(id, vertical, zero, cursor) {
  const svg = document.getElementById(id);
  svg.replaceChildren();
  const length = vertical ? svg.clientHeight : svg.clientWidth;
  let d = '';
  for (let n = Math.ceil(-zero / UNIT); zero + n * UNIT < length; n++) {
    const p = Math.round(zero + n * UNIT) + 0.5;
    const major = n % 5 === 0;
    const from = major ? 0 : 11;
    d += vertical ? `M${from} ${p}H16` : `M${p} ${from}V16`;
    if (!major) continue;
    const label = String(Math.abs(n));
    if (vertical) {
      [...label].forEach((c, i) => add(svg, 'text', { x: 2, y: p - 4 - (label.length - 1 - i) * 10 }, c));
    } else {
      add(svg, 'text', { x: p + 3, y: 10 }, label);
    }
  }
  add(svg, 'path', { d, stroke: '#000' });
  add(svg, 'path', { d: vertical ? `M0 ${cursor}H16` : `M${cursor} 0V16`, stroke: '#000', 'stroke-dasharray': '1 1' });
}

function drawRulers() {
  drawRuler('hr', false, 324, 384.5);
  drawRuler('vr', true, 96, 159.5);
}
drawRulers();
addEventListener('resize', drawRulers);
```
